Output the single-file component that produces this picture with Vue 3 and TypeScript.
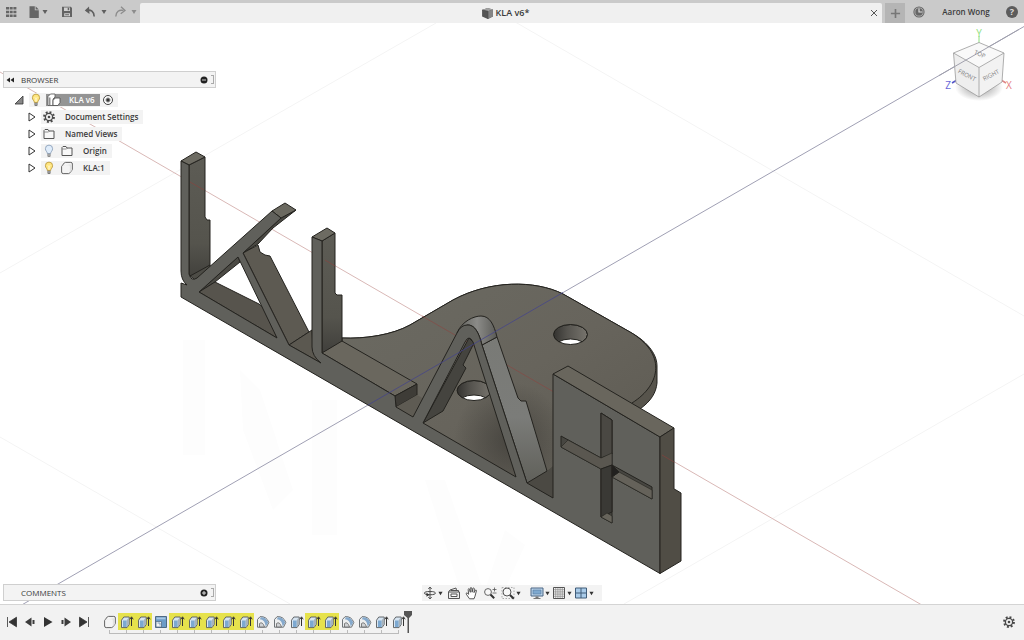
<script setup lang="ts">
import { ref } from 'vue'

interface TreeRow {
  label: string
  icons: string[]
}

interface Feature {
  kind: 'body' | 'extrude' | 'sketch' | 'fillet'
  marked: boolean
}

const rows: TreeRow[] = [
  { label: 'Document Settings', icons: ['gear'] },
  { label: 'Named Views', icons: ['folder'] },
  { label: 'Origin', icons: ['bulb-off', 'folder'] },
  { label: 'KLA:1', icons: ['bulb-on', 'body'] },
]

const f = (kind: Feature['kind'], marked = false): Feature => ({ kind, marked })
const features: Feature[] = [
  f('body'), f('extrude', true), f('extrude', true), f('sketch'),
  f('extrude', true), f('extrude', true), f('extrude', true), f('extrude', true), f('extrude', true),
  f('fillet'), f('fillet'), f('extrude'), f('extrude', true), f('extrude', true),
  f('fillet'), f('fillet'), f('extrude'), f('extrude'),
]

const playback = [
  { id: 'first', label: 'Go to start' },
  { id: 'prev', label: 'Step back' },
  { id: 'play', label: 'Play' },
  { id: 'next', label: 'Step forward' },
  { id: 'last', label: 'Go to end' },
]

const navTools = [
  { id: 'orbit', label: 'Orbit', menu: true },
  { id: 'look', label: 'Look at', menu: false },
  { id: 'pan', label: 'Pan', menu: false },
  { id: 'zoom', label: 'Zoom', menu: false },
  { id: 'fit', label: 'Fit', menu: true },
  { id: 'display', label: 'Display settings', menu: true },
  { id: 'gridset', label: 'Grid and snaps', menu: true },
  { id: 'viewports', label: 'Viewports', menu: true },
]

const active = ref(true)
</script>

<template>
  <div class="app">
    <svg class="defs" aria-hidden="true">
      <symbol id="caret" viewBox="0 0 6 6"><path d="M.5 1h5L3 5z" fill="currentColor" /></symbol>
      <symbol id="apps" viewBox="0 0 14 14">
        <path d="M2 2h3v2.600H2zM5.700 2h3v2.600h-3zM9.400 2h3v2.600h-3zM2 5.700h3v2.600H2zM5.700 5.700h3v2.600h-3zM9.400 5.700h3v2.600h-3zM2 9.400h3V12H2zM5.700 9.400h3V12h-3zM9.400 9.400h3V12h-3z" fill="#666" />
      </symbol>
      <symbol id="file" viewBox="0 0 14 14">
        <path d="M2.500 1.200h5.300v4h4V13H2.500z" fill="#666" /><path d="M8.600 1.200l3.200 3.200H8.600z" fill="#666" />
      </symbol>
      <symbol id="save" viewBox="0 0 14 14">
        <path d="M2 1.800h8.800L12 3v9H2z" fill="#636363" />
        <path d="M4 2.500h6v3.500H4zM4.200 8.300h5.800v3H4.200z" fill="#d0d0d0" />
        <path d="M7.700 2.800h1.500v2.500H7.700zM5.200 9.300h3.800v1H5.200z" fill="#636363" />
      </symbol>
      <symbol id="undo" viewBox="0 0 14 14">
        <path d="M3.300 5.400C8 4.300 11 6.500 11.200 11.500" fill="none" stroke="currentColor" stroke-width="1.600" />
        <path d="M6 1.500L1.800 5.500 6.500 9z" fill="currentColor" />
      </symbol>
      <symbol id="redo" viewBox="0 0 14 14">
        <path d="M10.500 5.400C6 4.500 3 6.500 2.800 11.500" fill="none" stroke="currentColor" stroke-width="1.400" />
        <path d="M8 1.800L12 5.500 7.700 8.700" fill="none" stroke="currentColor" stroke-width="1.300" />
      </symbol>
      <symbol id="cube" viewBox="0 0 12 12">
        <path d="M1 2.800L6 1l5 1.200v6.600L6.300 11 1 8.800z" fill="#555" />
        <path d="M1 2.800L6 1l5 1.200-4.600 1.700z" fill="#a3a3a3" /><path d="M6.400 3.900L11 2.200v6.600L6.300 11z" fill="#858585" />
        <path d="M1 2.800l5.400 1.100V11" fill="none" stroke="#444" stroke-width=".6" />
      </symbol>
      <symbol id="gear" viewBox="0 0 14 14">
        <circle cx="7" cy="7" r="4.900" fill="none" stroke="#484848" stroke-width="2" stroke-dasharray="1.920 1.920" />
        <circle cx="7" cy="7" r="3.600" fill="none" stroke="#484848" stroke-width="1.300" />
        <circle cx="7" cy="7" r="1.300" fill="#484848" />
      </symbol>
      <symbol id="folder" viewBox="0 0 14 14">
        <path d="M2 11.500V3.500l1-1h3l1 1.500h5v7.500z" fill="#f8f8f8" stroke="#555" />
        <path d="M2.300 5h4.200l1-1" fill="none" stroke="#777" stroke-width=".8" />
      </symbol>
      <symbol id="bulb-on" viewBox="0 0 14 14">
        <path d="M5.300 9.500C5.300 7.500 3.400 7 3.400 4.700a3.600 3.600 0 017.200 0C10.600 7 8.700 7.500 8.700 9.500z" fill="#ffe680" stroke="#b59336" stroke-width=".8" />
        <path d="M6 4.500l1 1 1-1M7 5.500v3" fill="none" stroke="#fff" stroke-width=".8" />
        <path d="M5.300 9.800h3.400v2.400l-1 .9H6.300l-1-.9z" fill="#777" /><path d="M5.300 11h3.400" stroke="#ddd" stroke-width=".6" />
      </symbol>
      <symbol id="bulb-off" viewBox="0 0 14 14">
        <path d="M5.300 9.500C5.300 7.500 3.400 7 3.400 4.700a3.600 3.600 0 017.200 0C10.600 7 8.700 7.500 8.700 9.500z" fill="#e0edfb" stroke="#8398b3" stroke-width=".8" />
        <path d="M5.300 9.800h3.400v2.400l-1 .9H6.300l-1-.9z" fill="#8a8a8a" /><path d="M5.300 11h3.400" stroke="#ddd" stroke-width=".6" />
      </symbol>
      <symbol id="body" viewBox="0 0 14 14">
        <path d="M1.600 5.500L4.200 2q.5-.6 1.300-.6h5.300q1.600 0 1.600 1.600v5.600L9.800 12q-.5.600-1.200.600H3.200q-1.600 0-1.600-1.600z" fill="#f4f4f4" stroke="#555" stroke-width=".9" />
        <path d="M2 5l1-.7h5.500q1.400 0 1.400 1.400v6.200l2.200-3V3" fill="#dcdcdc" opacity=".8" />
      </symbol>
      <symbol id="component" viewBox="0 0 14 14">
        <path d="M1 12.500V3.500L3.500 1h4.500v3L6 6v6.500z" fill="#fff" stroke="#555" stroke-width=".8" />
        <path d="M2.800 4.500V12" stroke="#777" stroke-width="1.200" />
        <path d="M6 12.500V7.500L8 5h5v4.500L11 12.500z" fill="#fff" stroke="#555" stroke-width=".9" />
      </symbol>
      <symbol id="extrude" viewBox="0 0 14 14">
        <path d="M1.500 5.200L3.800 2h5.400v7.500L7 12.600H1.500z" fill="#d7e5f2" stroke="#565a5e" stroke-width=".9" />
        <path d="M3 5.500h3.700V12H3z" fill="#7da9d1" /><path d="M6.800 5L9 2.500v6.800L6.800 12z" fill="#a7b2bb" />
        <path d="M11.500 11V2.500M9.800 4.300l1.700-2.500 1.700 2.500" fill="none" stroke="#333" stroke-width="1" />
      </symbol>
      <symbol id="sketch" viewBox="0 0 14 14">
        <path d="M1.500 1.500h11v11h-11z" fill="#6c9cc8" stroke="#506a83" />
        <path d="M2.500 2.500h9v1.800h-9z" fill="#a9c7e3" /><path d="M2 6.500h5.500V12H2z" fill="#f3f3f3" stroke="#55708a" stroke-width=".8" />
        <path d="M3.500 8h2.500v2.500" fill="none" stroke="#779bbd" />
      </symbol>
      <symbol id="fillet" viewBox="0 0 14 14">
        <path d="M1.500 12.200V4.500L4 1.700q6.500-.7 8.800 5.800L10.500 12.200z" fill="#eceeef" stroke="#60656a" stroke-width=".9" />
        <path d="M3.800 4.200Q9 4.500 9.800 11.500l2.400-4Q10 2 5 2.300z" fill="#85a9cc" />
        <path d="M3.500 12V8.500q3-2.500 5 3.500z" fill="#d0d3d6" stroke="#666" stroke-width=".8" />
      </symbol>
      <symbol id="first" viewBox="0 0 14 14"><path d="M2.500 2v10M11.500 2.200v9.600L4 7z" fill="#333" stroke="#333" stroke-width=".8" /></symbol>
      <symbol id="last" viewBox="0 0 14 14"><path d="M11.500 2v10M2.500 2.200v9.600L10 7z" fill="#333" stroke="#333" stroke-width=".8" /></symbol>
      <symbol id="prev" viewBox="0 0 14 14"><path d="M8.500 2.500v9L2 7zM9.500 5h2v4h-2z" fill="#3c3c3c" /></symbol>
      <symbol id="next" viewBox="0 0 14 14"><path d="M5.500 2.500v9L12 7zM2.500 5h2v4h-2z" fill="#3c3c3c" /></symbol>
      <symbol id="play" viewBox="0 0 14 14"><path d="M3 2l8.500 5L3 12z" fill="#333" /></symbol>
      <symbol id="orbit" viewBox="0 0 14 14">
        <path d="M7 1v12M5.300 3L7 1l1.700 2M5.300 11L7 13l1.700-2" fill="none" stroke="#555" />
        <path d="M9.500 5.600c4.500.6 4 3.200-2.500 3.200S-.5 6.200 4.500 5.600h5" fill="none" stroke="#444" />
        <path d="M3.500 6.800l3 2-3 2z" fill="#333" />
      </symbol>
      <symbol id="look" viewBox="0 0 14 14">
        <path d="M1.500 6h11v6.500h-11zM1.500 6l1.500-2 6-2 .5 2.500M3.500 4.500h8V6" fill="#eee" stroke="#555" />
        <path d="M4 8h6v2.500H4z" fill="#fff" stroke="#555" />
      </symbol>
      <symbol id="pan" viewBox="0 0 14 14">
        <path d="M4.500 12.800L1.300 8.200q-.5-1.200.6-1.400l1.800 1.500-.6-5q.6-1.200 1.400 0l.8 3-.1-4.300q.8-1 1.600 0l.3 4.200.8-3.900q1-.7 1.500.3l-.4 4 1.400-2.500q1.200-.3 1 .8l-1.400 5.300-1 2.600z" fill="#fff" stroke="#444" stroke-width=".9" />
      </symbol>
      <symbol id="zoom" viewBox="0 0 14 14">
        <circle cx="5" cy="6" r="3.400" fill="#f8f8f8" stroke="#666" /><path d="M7.500 8.500l3.700 3.700" stroke="#333" stroke-width="2" />
        <path d="M9.500 3.500h4M11.500 1.500v4M9.500 7h4" stroke="#555" stroke-width=".8" />
      </symbol>
      <symbol id="fit" viewBox="0 0 14 14">
        <path d="M1 1.500h12v11H1z" fill="none" stroke="#aaa" stroke-dasharray="1.500 1.500" />
        <circle cx="6" cy="6" r="4" fill="#f8f8f8" stroke="#555" /><path d="M9 9l3.800 3.800" stroke="#333" stroke-width="2" />
      </symbol>
      <symbol id="display" viewBox="0 0 14 14">
        <path d="M1 2h12v8H1z" fill="#b8d3ec" stroke="#4c6784" /><path d="M3 4h8v4H3z" fill="#7ea9d0" stroke="#57789a" stroke-width=".6" />
        <path d="M5.500 10.500h3v1.500h2v1h-7v-1h2z" fill="#777" />
      </symbol>
      <symbol id="gridset" viewBox="0 0 14 14">
        <path d="M1.500 1.500h11v11h-11z" fill="#f4f4f4" stroke="#555" />
        <path d="M3.700 2v10M5.900 2v10M8.100 2v10M10.300 2v10M2 3.700h10M2 5.900h10M2 8.100h10M2 10.300h10" stroke="#888" stroke-width=".7" />
      </symbol>
      <symbol id="viewports" viewBox="0 0 14 14">
        <path d="M1.500 2h11v10h-11z" fill="#a9cbe9" stroke="#405c79" /><path d="M7 2v10M1.500 7h11" stroke="#405c79" />
      </symbol>
    </svg>

    <header class="topbar">
      <div class="tools">
        <button class="ico apps" aria-label="Data panel"><svg><use href="#apps" /></svg></button>
        <button class="ico file" aria-label="File"><svg><use href="#file" /></svg><svg class="caret"><use href="#caret" /></svg></button>
        <button class="ico save" aria-label="Save"><svg><use href="#save" /></svg></button>
        <button class="ico undo" aria-label="Undo"><svg><use href="#undo" /></svg><svg class="caret"><use href="#caret" /></svg></button>
        <button class="ico redo" aria-label="Redo"><svg><use href="#redo" /></svg><svg class="caret"><use href="#caret" /></svg></button>
      </div>
      <div class="tab">
        <span class="tab-title"><svg><use href="#cube" /></svg>KLA v6*</span>
        <button class="close" aria-label="Close tab"><svg viewBox="0 0 8 8"><path d="M1 1l6 6M7 1L1 7" stroke="#555" /></svg></button>
      </div>
      <button class="add" aria-label="New tab"><svg viewBox="0 0 12 12"><path d="M6 1v10M1 6h10" stroke="#777" stroke-width="1.800" /></svg></button>
      <div class="account">
        <button class="ico" aria-label="Job status">
          <svg viewBox="0 0 14 14"><circle cx="7" cy="7" r="5.600" fill="#666" /><circle cx="7" cy="7" r="4.100" fill="none" stroke="#bbb" stroke-width=".8" /><path d="M7 3.500V7h3.200" fill="none" stroke="#ddd" stroke-width="1.200" /></svg>
        </button>
        <button class="user">Aaron Wong</button>
        <button class="help" aria-label="Help">?</button>
      </div>
    </header>

    <main class="canvas">
      <svg class="scene" viewBox="0 23 1024 581" preserveAspectRatio="xMidYMid slice" aria-label="Model">
        <defs>
          <linearGradient id="plate" x1="0" y1="0" x2="1" y2="1">
            <stop offset="0" stop-color="#6b6a62" /><stop offset=".5" stop-color="#67645c" /><stop offset="1" stop-color="#5c5951" />
          </linearGradient>
          <linearGradient id="leg" x1="0" y1="0" x2="0" y2="1">
            <stop offset="0" stop-color="#797a76" /><stop offset=".55" stop-color="#7b7c79" /><stop offset="1" stop-color="#60605a" />
          </linearGradient>
          <linearGradient id="side" x1="0" y1="0" x2="0" y2="1">
            <stop offset="0" stop-color="#5d5c55" /><stop offset=".7" stop-color="#55544d" /><stop offset="1" stop-color="#403f3b" />
          </linearGradient>
          <linearGradient id="cap" x1="0" y1="0" x2="1" y2="0">
            <stop offset="0" stop-color="#5e5e59" /><stop offset=".5" stop-color="#8b8b88" /><stop offset="1" stop-color="#5a5a56" />
          </linearGradient>
          <linearGradient id="bore" x1="0" y1="0" x2="1" y2="0">
            <stop offset="0" stop-color="#33322f" /><stop offset=".4" stop-color="#55534e" /><stop offset="1" stop-color="#77746d" />
          </linearGradient>
          <radialGradient id="shade"><stop offset="0" stop-color="#35332f" stop-opacity=".6" /><stop offset=".5" stop-color="#35332f" stop-opacity=".3" /><stop offset="1" stop-color="#35332f" stop-opacity="0" /></radialGradient>
          <clipPath id="h1"><ellipse cx="570.500" cy="334.500" rx="17" ry="10" /></clipPath>
          <clipPath id="h2"><ellipse cx="474" cy="390.500" rx="17" ry="10" /></clipPath>
          <clipPath id="top"><path d="M342 338C365 339 392 335 410 325L453 300C490 280 535 280 563 294L630 332C666 353 662 384 632 403L553 498 396 412 342 341z" /></clipPath>
        </defs>
        <g fill="none" stroke="#f4f4f4">
          <path d="M0 273L436 23M510 19l514 297M0 437l290 167M624 604l400-230" />
        </g>
        <g fill="#fdfdfd">
          <path d="M183 340h22v115h-22zM240 370l20 20 33 100-20 20-30-80zM312 400h25v135h-25zM425 480l20 0 40 115-25-5zM525 545l-25 55-15-10 20-60z" />
        </g>
        <path d="M0 72L940 615.500" stroke="#d9b8b6" fill="none" />
        <path d="M0 617.500L1024 26.500" stroke="#a0a0b4" fill="none" />

        <g stroke="#24231f" stroke-width="1" stroke-linejoin="round">
          <path d="M342 338C365 339 392 335 410 325L453 300C490 280 535 280 563 294L630 332C650 343 657 356 657 366V383C656 393 651 401 640 409L600 470 553 498 396 407z" fill="#57544c" />
          <path d="M342 338C365 339 392 335 410 325L453 300C490 280 535 280 563 294L630 332C666 353 662 384 632 403L553 498 396 412 342 341z" fill="url(#plate)" />
          <ellipse cx="510" cy="440" rx="56" ry="58" fill="url(#shade)" stroke="none" clip-path="url(#top)" />
          <path d="M422 316L553 391.500" stroke="#913f3c" stroke-opacity=".5" />
          <g clip-path="url(#h1)">
            <ellipse cx="570.500" cy="334.500" rx="17" ry="10" fill="url(#bore)" />
            <ellipse cx="570.500" cy="349" rx="17" ry="10" fill="#fff" />
          </g>
          <ellipse cx="570.500" cy="334.500" rx="17" ry="10" fill="none" />
          <g clip-path="url(#h2)">
            <ellipse cx="474" cy="390.500" rx="17" ry="10" fill="url(#bore)" />
            <ellipse cx="474" cy="405" rx="17" ry="10" fill="#fff" />
          </g>
          <ellipse cx="474" cy="390.500" rx="17" ry="10" fill="none" />

          <path d="M189 165L205 157V217l2 3h3V266L195 280 189 274z" fill="url(#side)" />
          <path d="M181 161L196 152 205 157 189 165z" fill="#6d6b62" />
          <path d="M190 276L210 265V268L195 280z" fill="#4d4c46" />
          <path d="M199 292L238 257 240 262 215 282z" fill="#4b4a44" />
          <path d="M199 292L215 282 259 304 267 311 277 338z" fill="#57544d" />
          <path d="M281 218L296 210 273 228 258 244 243 253z" fill="#494842" />
          <path d="M272 211L285 203 296 210 281 218z" fill="#6b6960" />
          <path d="M243 253L258 245 260 252 265 255 270 256 309 332 289 345z" fill="#5d5a52" />
          <path d="M289 345L312 330 313 350 321 363z" fill="#5b5850" />
          <path d="M322 241L335 233V293l2 2h5V342L322 353z" fill="url(#side)" />
          <path d="M312 237L327 228 335 233 322 241z" fill="#6d6b62" />
          <path d="M322 353L342 341 417 384 395 396z" fill="#6a675e" />
          <path d="M395 396L417 384V395L396 407z" fill="#3e3c37" />
          <path d="M396 407L417 395 424 399 413 417z" fill="#5e5b53" stroke="none" />

          <path d="M423 423L469 338 474 343 463 365l3 3L443 411z" fill="#45443f" />
          <path d="M527 483L547 471 553 466V498z" fill="#4b4943" stroke="none" />
          <path d="M482 345L497 337 518 398l3 3h5L547 471 527 483z" fill="url(#leg)" />
          <path d="M457 333C462 321 474 316 481 316 490 316 494 325 497 337L482 345C479 332 474 324 467 325z" fill="url(#cap)" />

          <path d="M181 161L189 165V274Q191 282 197 278L272 211 281 218 243 253 289 345 321 363Q312 356 312 347V237L322 241V353L395 396 396 407 413 417 457 333Q461 325 467 325C474 325 478 330 482 345L527 483 553 498V374L660 437V573.500L181 297V283L187 285Q181 280 181 271zM199 292L277 338 238 257zM423 423L516 477 473 342Q469 334 465 342z" fill="#60605b" fill-rule="evenodd" />
          <path d="M553 374L568 366 674 428 660 437z" fill="#69665d" />
          <path d="M660 437L674 428V489l2 1 5 3V561L660 573.500z" fill="#504d45" />

          <path d="M601 413L612 420V465L652 487V499L612 477V523L601 517V469L561 447V436L601 458z" fill="#474641" />
          <path d="M601 413L612 420V454L601 458z" fill="#4a4843" />
          <path d="M561 447L568 440 601 458 612 453V465L601 469z" fill="#5a5750" stroke-width=".6" />
          <path d="M601 469L612 465V512L601 517z" fill="#3a3935" />
          <path d="M601 517L607 513 612 516V523z" fill="#67645b" stroke-width=".6" />
          <path d="M612 477L619 472 652 490V499z" fill="#65625a" stroke-width=".6" />
          <path d="M612 465V477L619 472z" fill="#22211f" />
        </g>
        <path d="M190 182L204 190M325 260l10 6M662 455l12 7" stroke="#973c38" stroke-opacity=".5" />
        <path d="M368 405L563 292.500" stroke="#42428f" stroke-opacity=".7" />
      </svg>

      <div class="overlay">
        <section class="browser">
          <div class="panel">
            <button class="collapse" aria-label="Collapse"><svg viewBox="0 0 8 6"><path d="M4 .5v5L.5 3zM8 .5v5L4.500 3z" fill="#222" /></svg></button>
            <h2>BROWSER</h2>
            <button class="dot" aria-label="Minimize browser"><svg viewBox="0 0 8 8"><circle cx="4" cy="4" r="3.500" fill="#222" /><path d="M2 4h4" stroke="#ccc" /></svg></button>
            <i class="grip"></i>
          </div>
          <ul class="tree">
            <li class="root">
              <button class="toggle" aria-label="Collapse KLA v6"><svg viewBox="0 0 10 10"><path d="M1 9L9 1v8z" fill="#888" stroke="#333" stroke-width=".8" /></svg></button>
              <div class="chip">
                <svg><use href="#bulb-on" /></svg>
                <span class="selected"><svg><use href="#component" /></svg>KLA v6</span>
                <input v-model="active" type="radio" :value="true" name="active" aria-label="Activate KLA v6" />
              </div>
            </li>
            <li v-for="row in rows" :key="row.label">
              <button class="toggle" :aria-label="'Expand ' + row.label"><svg viewBox="0 0 10 10"><path d="M2 1l6 4-6 4z" fill="#fff" stroke="#333" /></svg></button>
              <div class="chip">
                <svg v-for="icon in row.icons" :key="icon"><use :href="'#' + icon" /></svg>
                <span class="name">{{ row.label }}</span>
              </div>
            </li>
          </ul>
        </section>

        <section class="panel comments">
          <h2>COMMENTS</h2>
          <button class="dot" aria-label="Expand comments"><svg viewBox="0 0 8 8"><circle cx="4" cy="4" r="3.500" fill="#222" /><path d="M2 4h4M4 2v4" stroke="#ddd" /></svg></button>
          <i class="grip"></i>
        </section>

        <nav class="navbar" aria-label="Navigation">
          <button v-for="t in navTools" :key="t.id" :class="['nav', t.id]" :aria-label="t.label">
            <svg><use :href="'#' + t.id" /></svg><svg v-if="t.menu" class="caret"><use href="#caret" /></svg>
          </button>
        </nav>

        <svg class="viewcube" viewBox="0 0 80 80" aria-label="View cube">
          <defs>
            <radialGradient id="floor"><stop offset="0" stop-color="#777" stop-opacity=".8" /><stop offset="1" stop-color="#777" stop-opacity="0" /></radialGradient>
          </defs>
          <ellipse cx="40" cy="64" rx="24" ry="14" fill="url(#floor)" />
          <path d="M40 13v7" stroke="#8ee07e" /><path d="M18 57l-5 3" stroke="#5454c8" stroke-width="1.500" /><path d="M62 57l5 3" stroke="#e08686" stroke-width="1.500" />
          <path d="M14.500 30L40 19.500 65 30 40 44.500z" fill="#f9f9f9" /><path d="M14.500 30L40 44.500V74L17 60z" fill="#eee" /><path d="M65 30L40 44.500V74L63 59z" fill="#f2f2f2" />
          <path d="M14.500 30L40 19.500 65 30 40 44.500zM14.500 30L17 60 40 74 63 59 65 30M40 44.500V74" fill="none" stroke="#9a9a9a" stroke-width=".8" />
          <path d="M0 52.600L80 6.400" stroke="#a0a0ad" />
          <g font-size="6" fill="#808080" text-anchor="middle">
            <text transform="translate(27 54) rotate(28)">FRONT</text>
            <text transform="translate(53 54) rotate(-28)">RIGHT</text>
            <text transform="translate(40 33) rotate(24)">TOP</text>
          </g>
          <g font-size="10" text-anchor="middle">
            <text x="40" y="14" fill="#8ee07e">Y</text><text x="9" y="66" fill="#6969d8">Z</text><text x="70" y="66" fill="#e58080">X</text>
          </g>
        </svg>
      </div>
    </main>

    <footer class="timeline">
      <div class="playback">
        <button v-for="p in playback" :key="p.id" :aria-label="p.label"><svg><use :href="'#' + p.id" /></svg></button>
      </div>
      <ol class="features">
        <li v-for="(item, i) in features" :key="i" :class="{ marked: item.marked }">
          <button :aria-label="item.kind + ' ' + (i + 1)"><svg><use :href="'#' + item.kind" /></svg></button>
        </li>
      </ol>
      <svg class="marker" viewBox="0 0 10 24"><path d="M1 1h8v4L6 8v15H4.500V8L1 5z" fill="#555" /></svg>
      <button class="settings" aria-label="Timeline settings"><svg><use href="#gear" /></svg></button>
    </footer>
  </div>
</template>

<style>
body { margin: 0; }
</style>

<style scoped>
* { box-sizing: border-box; }
.app { min-height: 100vh; display: flex; flex-direction: column; background: #fff; color: #3a3a3a; font: 8px/14px "Open Sans", "Noto Sans", sans-serif; }
button { display: flex; align-items: center; justify-content: center; padding: 0; border: 0; background: none; color: inherit; font: inherit; }
svg { display: block; flex: none; width: 14px; height: 14px; }
.defs { position: absolute; width: 0; height: 0; }
h2 { margin: 0; font-size: 8px; font-weight: 400; line-height: 15px; }
ul, ol { margin: 0; padding: 0; list-style: none; }
.caret { width: 6px; height: 6px; }

.topbar { height: 23px; display: flex; background: #cacaca; }
.tools { width: 140px; display: flex; align-items: center; padding-left: 4px; color: #5f5f5f; }
.file { margin-left: 9px; gap: 1px; }
.save { margin-left: 12px; }
.undo { margin-left: 9px; gap: 4px; }
.redo { margin-left: 6px; gap: 4px; color: #8c8c8c; }
.tab { flex: 1; display: flex; align-items: center; margin-top: 3px; padding-right: 4px; background: #f0f0f0; border-radius: 2px 2px 0 0; }
.tab-title { flex: 1; display: flex; align-items: center; justify-content: center; gap: 2px; font-size: 9px; font-weight: 600; }
.tab-title svg { width: 13px; height: 13px; }
.close svg { width: 8px; height: 8px; }
.add { width: 20px; margin: 3px 0 0 3px; background: #b5b5b5; }
.add svg { width: 11px; height: 11px; }
.account { width: 119px; display: flex; align-items: center; justify-content: space-between; padding: 0 6px 0 7px; }
.user { font-weight: 600; }
.help { width: 12px; height: 12px; border-radius: 50%; background: #5c5c5c; color: #ddd; font-size: 9px; font-weight: 700; line-height: 12px; }

.canvas { position: relative; flex: 1; display: grid; overflow: hidden; }
.scene { position: absolute; inset: 0; width: 100%; height: 100%; }
.overlay { position: relative; display: grid; }
.overlay > * { grid-area: 1 / 1; }
.browser { place-self: start; margin: 48px 0 0 3px; }
.panel { width: 213px; height: 17px; display: flex; align-items: center; padding-right: 1px; background: #f3f3f3; border: 1px solid #cfcfcf; }
.collapse { width: 17px; padding-right: 5px; }
.collapse svg { width: 8px; height: 6px; }
.panel h2 { flex: 1; }
.dot { width: 8px; margin-right: 3px; }
.dot svg { width: 8px; height: 8px; }
.grip { width: 3px; height: 9px; border: 1px solid #aaa; border-left: 0; }
.comments { place-self: end start; margin: 0 0 3px 3px; padding-left: 17px; }

.tree { padding-top: 3px; }
.tree li { display: flex; align-items: center; height: 17px; padding-left: 23px; font-weight: 600; }
.tree .root { padding-left: 10px; }
.toggle { width: 12px; margin-right: 3px; }
.root .toggle { margin-right: 4px; }
.toggle svg { width: 10px; height: 10px; }
.chip { height: 14px; display: flex; align-items: center; gap: 4px; padding: 0 5px 0 1px; background: #f3f3f3; }
.chip .name { padding-left: 5px; }
.root .chip { gap: 3px; padding: 0 5px 0 0; }
.selected { height: 12px; display: flex; align-items: center; gap: 8px; padding: 0 5px 0 1px; background: #949494; color: #fff; }
.root input { appearance: none; width: 10px; height: 10px; margin: 0; border: 1px solid #444; border-radius: 50%; background: radial-gradient(circle, #333 0 1px, #fff 3px); }

.navbar { place-self: end center; display: flex; align-items: center; height: 16px; margin-bottom: 3px; padding: 0 8px 0 1px; background: #f3f3f3; }
.nav { color: #333; gap: 1px; margin-right: 4px; }
.nav.fit { margin-right: 9px; }
.nav.gridset, .nav.display { margin-right: 2px; }
.nav.viewports { margin-right: 0; }
.nav .caret { width: 5px; height: 5px; }
.viewcube { place-self: start end; width: 80px; height: 80px; margin: 0 5px 0 0; }

.timeline { height: 36px; display: flex; align-items: center; padding: 0 8px 2px 5px; background: #f2f2f2; border-top: 1px solid #d4d4d4; }
.playback { display: flex; gap: 4px; }
.features { display: flex; margin-left: 10px; padding-top: 4px; }
.features li { width: 17px; height: 21px; background: linear-gradient(#bbb, #bbb) 50% 100% / 100% 1px no-repeat, linear-gradient(#bbb, #bbb) 50% 100% / 1px 4px no-repeat; }
.features button { width: 17px; height: 17px; }
.features .marked button { background: #e6e24c; }
.features li:first-child { background-size: 50% 1px, 1px 4px; background-position: 100% 100%, 50% 100%; }
.features li:last-child { background-size: 50% 1px, 1px 4px; background-position: 0 100%, 50% 100%; }
.marker { width: 10px; height: 24px; margin: 0 auto 0 -4px; }
</style>
